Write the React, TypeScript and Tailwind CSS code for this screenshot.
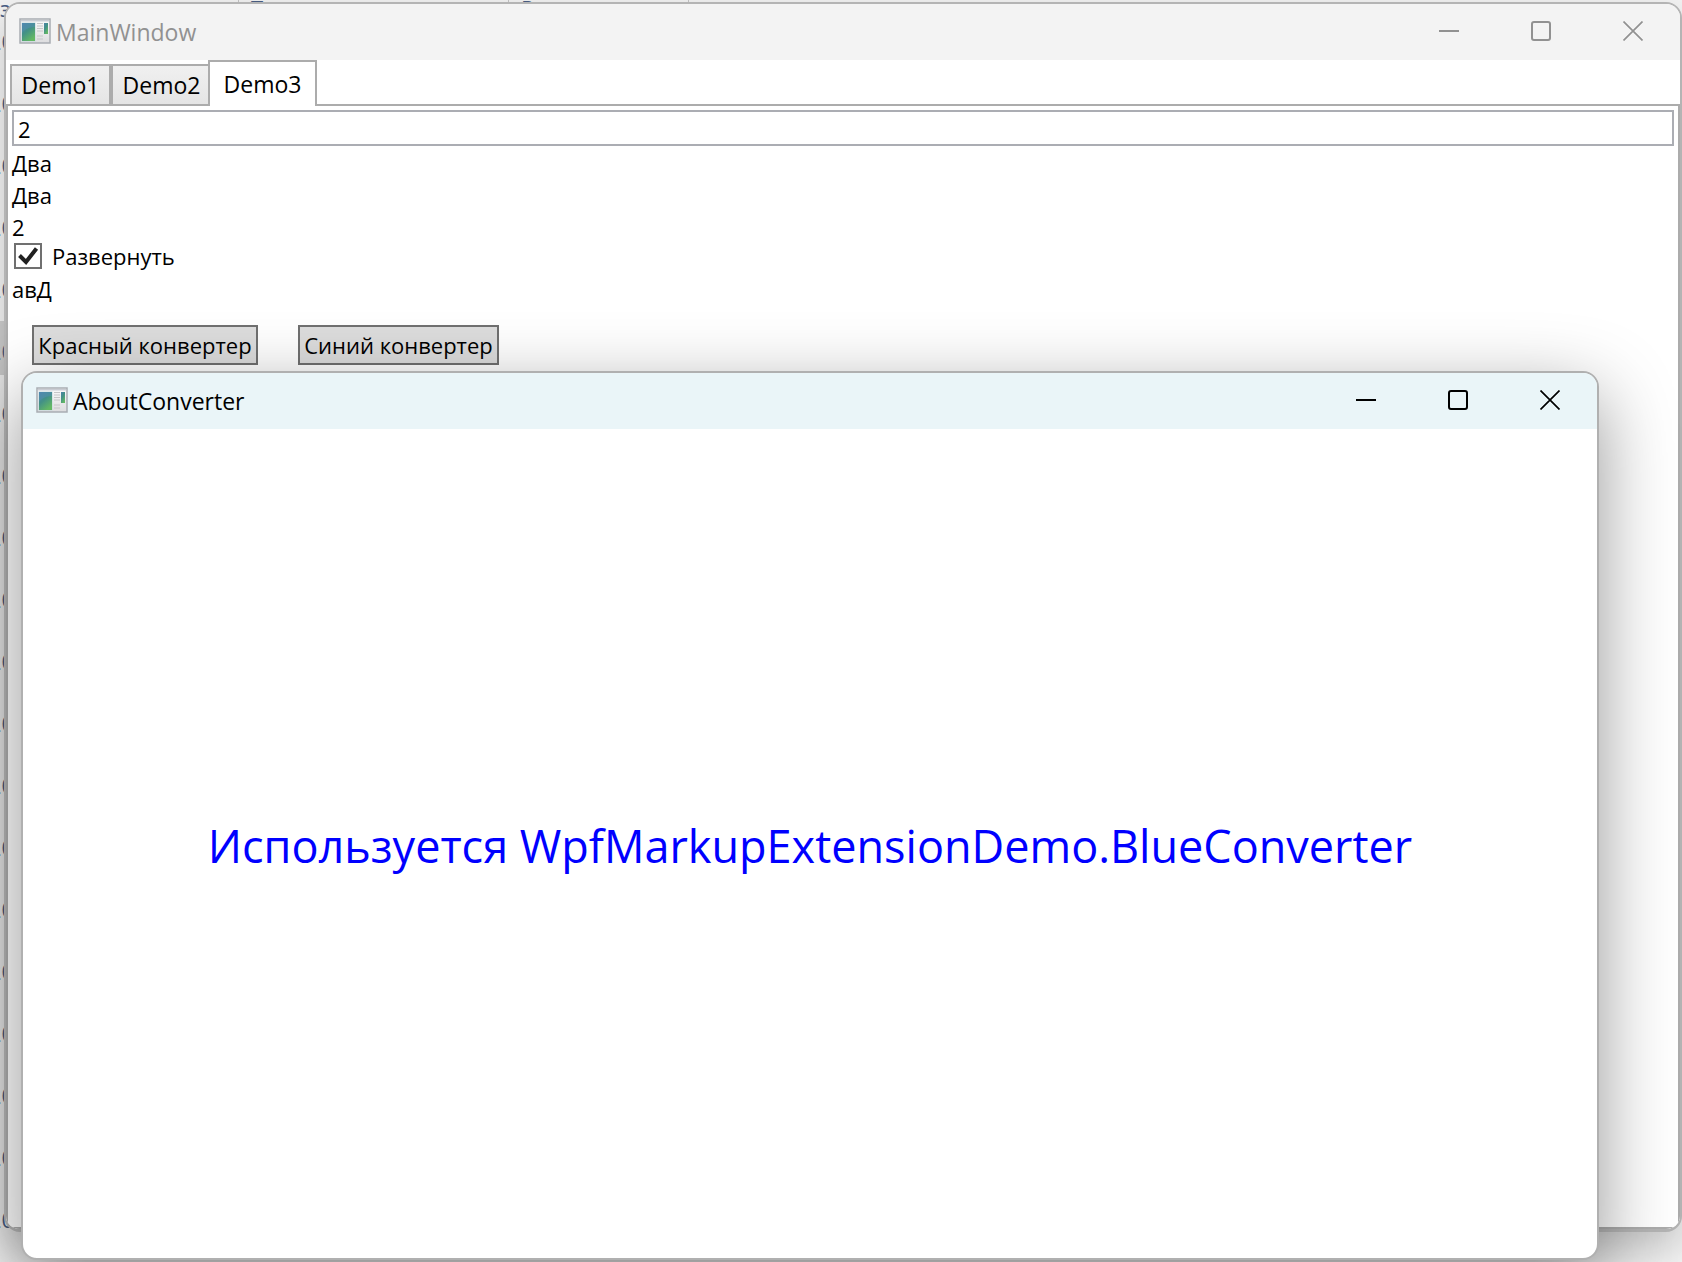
import { useId, useState } from "react";
import clsx from "clsx";

const TABS = ["Demo1", "Demo2", "Demo3"];
const ROWS = Array.from({ length: 20 }, (_, i) => i);
const SELECTED_ROW = 5;

const AppIcon = () => {
  const id = useId();
  return (
    <svg width="32" height="26" viewBox="0 0 32 26" aria-hidden="true">
      <defs>
        <linearGradient id={`${id}-frame`} x1="0" y1="0" x2="0" y2="1">
          <stop offset="0" stopColor="#fbfbfb" />
          <stop offset="1" stopColor="#dcdcde" />
        </linearGradient>
        <linearGradient id={`${id}-pane`} x1="0" y1="0" x2="0.6" y2="1">
          <stop offset="0" stopColor="#4a82a8" />
          <stop offset="0.5" stopColor="#439186" />
          <stop offset="1" stopColor="#63b864" />
        </linearGradient>
      </defs>
      <rect x="1" y="1" width="30" height="24" fill={`url(#${id}-frame)`} stroke="#a9adb3" strokeWidth="1.5" />
      <rect x="2" y="2" width="28" height="1.5" fill="#c9ccd3" />
      <rect x="2.5" y="4.5" width="14" height="19" fill="#c3d9dd" />
      <rect x="3" y="5" width="13" height="18" fill={`url(#${id}-pane)`} />
      <path d="M3 15C6 11 11 9 16 9V5H3Z" fill="#5a8fbd" opacity="0.4" />
      <path d="M18 5.5h6M18 8h6M18 10.5h6M18 13h6M18 18h6M18 21h6" stroke="#c6c6c8" strokeWidth="1" />
      <rect x="25" y="5" width="4" height="11" fill={`url(#${id}-pane)`} />
    </svg>
  );
};

type TitleBarProps = {
  title: string;
  active?: boolean;
};

const TitleBar = ({ title, active = false }: TitleBarProps) => (
  <header
    className={clsx(
      "flex h-14 shrink-0 items-center pr-px pb-[2px]",
      active ? "bg-[#eaf5f8] text-black" : "bg-[#f3f3f3] text-[#919191]"
    )}
  >
    <div className="flex flex-1 items-center gap-[5px] pl-[13px]">
      <AppIcon />
      <h1 className="pt-[2px] text-[23px] leading-8">{title}</h1>
    </div>
    <div className="flex h-full">
      <button type="button" aria-label="Minimize" className="flex w-[92px] items-center justify-center">
        <svg width="20" height="20" fill="none" stroke="currentColor" strokeWidth="2">
          <path d="M0 10h20" />
        </svg>
      </button>
      <button type="button" aria-label="Maximize" className="flex w-[92px] items-center justify-center">
        <svg width="20" height="20" fill="none" stroke="currentColor" strokeWidth="2">
          <rect x="1" y="1" width="18" height="18" rx="2" />
        </svg>
      </button>
      <button type="button" aria-label="Close" className="flex w-[92px] items-center justify-center">
        <svg width="20" height="20" fill="none" stroke="currentColor" strokeWidth="1.7">
          <path d="M0.5 0.5l19 19M19.5 0.5l-19 19" />
        </svg>
      </button>
    </div>
  </header>
);

// List of the window that lies behind, only its edges stay visible
const Backdrop = () => (
  <div className="h-screen overflow-hidden bg-[#f3f3f3] text-[#4a5f85]">
    <div className="flex h-5 items-end leading-6">
      <span className="w-[238px]">з</span>
      <span className="w-[270px] border-l border-[#c4c4c4] pl-3">Т</span>
      <span className="w-[180px] border-l border-[#c4c4c4] pl-3">Р</span>
      <span className="h-6 border-l border-[#c4c4c4]" />
    </div>
    <ul className="-mt-[9px] w-[14px]">
      {ROWS.map((row) => (
        <li
          key={row}
          className={clsx(
            "mb-2 flex h-[54px] items-center justify-end pt-[6px] leading-6",
            row === SELECTED_ROW && "bg-[#cfcfcf]"
          )}
        >
          20
        </li>
      ))}
    </ul>
  </div>
);

const Demo3 = () => {
  const [value, setValue] = useState("2");
  const [reversed, setReversed] = useState(true);
  return (
    <div className="flex flex-1 flex-col border-2 border-[#acacac] bg-white px-1 pt-1">
      <input
        aria-label="Число"
        value={value}
        onChange={(e) => setValue(e.target.value)}
        className="mb-px h-9 w-full border-2 border-[#abadb3] px-1 pt-[2px] outline-none"
      />
      <p>Два</p>
      <p>Два</p>
      <p>{value}</p>
      <label className="mb-1 flex h-[26px] items-center gap-2 pl-[2px]">
        <span className="grid">
          <input
            type="checkbox"
            checked={reversed}
            onChange={(e) => setReversed(e.target.checked)}
            className="peer col-start-1 row-start-1 h-[26px] w-7 appearance-none border-2 border-[#707070] bg-white"
          />
          <svg
            viewBox="0 0 28 26"
            className="pointer-events-none invisible col-start-1 row-start-1 h-[26px] w-7 peer-checked:visible"
            fill="none"
            stroke="#212121"
            strokeWidth="4"
          >
            <path d="M5.5 12.5l6.5 6.5L22.5 5.5" />
          </svg>
        </span>
        <span className="pl-[2px]">Развернуть</span>
      </label>
      <p>{reversed ? "авД" : "Два"}</p>
      <div className="flex gap-10 px-5 pt-5">
        <button type="button" className="h-10 w-[226px] border-2 border-[#707070] bg-[#dddddd] whitespace-nowrap">
          Красный конвертер
        </button>
        <button type="button" className="h-10 w-[201px] border-2 border-[#707070] bg-[#dddddd] whitespace-nowrap">
          Синий конвертер
        </button>
      </div>
    </div>
  );
};

const MainWindow = () => {
  const [tab, setTab] = useState("Demo3");
  return (
    <section className="absolute top-[2px] right-0 bottom-[30px] left-1 flex flex-col overflow-hidden rounded-2xl border-2 border-b-3 border-[#b4b4b4] bg-white shadow-[0_16px_40px_rgba(0,0,0,0.2)]">
      <TitleBar title="MainWindow" />
      <div role="tablist" className="-mb-[2px] flex items-end pl-1">
        {TABS.map((name) => (
          <button
            key={name}
            type="button"
            role="tab"
            aria-selected={tab === name}
            onClick={() => setTab(name)}
            className={clsx(
              "border-2 border-[#acacac] text-[23px]",
              tab === name
                ? "z-10 -ml-1 h-[46px] w-[109px] border-b-0 bg-white"
                : "h-[42px] w-[101px] bg-linear-to-b from-[#f0f0f0] to-[#e5e5e5]"
            )}
          >
            {name}
          </button>
        ))}
      </div>
      <Demo3 />
    </section>
  );
};

const AboutConverter = () => (
  <section className="absolute top-[371px] right-[83px] bottom-[2px] left-[21px] flex flex-col overflow-hidden rounded-2xl border-2 border-[#b0b0b0] bg-white shadow-[0_24px_76px_rgba(0,0,0,0.42)]">
    <TitleBar title="AboutConverter" active />
    <div className="flex flex-1 items-center justify-center">
      <p className="pt-1 text-[45px] leading-16 text-[#0000ff]">
        Используется WpfMarkupExtensionDemo.BlueConverter
      </p>
    </div>
  </section>
);

export default function App() {
  return (
    <main className="relative h-screen overflow-hidden font-['Open_Sans','Noto_Sans',sans-serif] text-[22px] leading-8 text-black">
      <Backdrop />
      <MainWindow />
      <AboutConverter />
    </main>
  );
}
